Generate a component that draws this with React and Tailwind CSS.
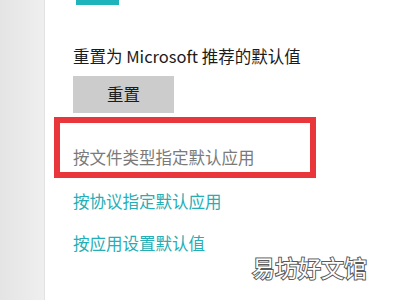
export default function App() {
  const font = { fontFamily: '"Noto Sans CJK SC", "Noto Sans", sans-serif' };
  return (
    <div className="relative flex w-[400px] h-[300px] overflow-hidden bg-white" style={font}>
      <div className="w-[45px] h-full bg-gradient-to-r from-[#e4e4e4] to-[#efefef] border-r border-[#e2e2e2]" />
      <div className="flex-1 flex flex-col pl-[28px]">
        <div className="ml-[3px] w-[43px] h-[5px] bg-[#1fb3bb]" />
        <div className="mt-[39px] text-[16.5px] leading-[24px] text-[#1b1b1b] whitespace-nowrap">
          重置为 Microsoft 推荐的默认值
        </div>
        <div className="mt-[8px] w-[101px] h-[37px] bg-[#cccccc] flex items-center justify-center text-[16.5px] text-[#1b1b1b]">
          重置
        </div>
        <div className="mt-[4px] -ml-[19px] w-[262px] border-[6px] border-[#e8363b] pl-[13px] pt-[22px] pb-[3px]">
          <div className="text-[16.5px] leading-[24px] text-[#7a7a7a] whitespace-nowrap">按文件类型指定默认应用</div>
        </div>
        <div className="mt-[11px] text-[16.5px] leading-[24px] text-[#25aeb6] whitespace-nowrap">按协议指定默认应用</div>
        <div className="mt-[18px] text-[16.5px] leading-[24px] text-[#25aeb6] whitespace-nowrap">按应用设置默认值</div>
      </div>
      <div className="absolute left-[252px] top-[252px] text-[23px] leading-[30px] text-white whitespace-nowrap [-webkit-text-stroke:2px_#5a5a5a] [paint-order:stroke_fill]">
        易坊好文馆
      </div>
    </div>
  );
}
